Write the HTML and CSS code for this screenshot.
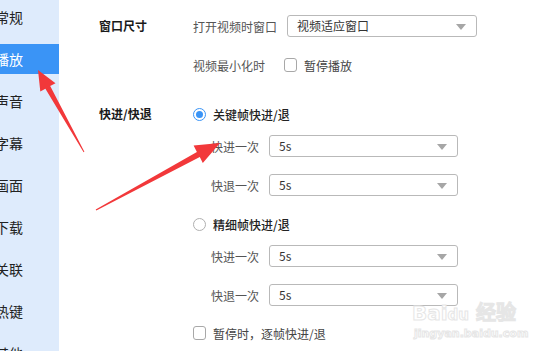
FILE: index.html
```html
<!DOCTYPE html>
<html lang="zh-CN">
<head>
<meta charset="utf-8">
<link rel="stylesheet" href="styles.css">
</head>
<body>
<div class="app">
  <nav class="sidebar">
    <div class="nav-item">常规</div>
    <div class="nav-item active">播放</div>
    <div class="nav-item">声音</div>
    <div class="nav-item">字幕</div>
    <div class="nav-item">画面</div>
    <div class="nav-item">下载</div>
    <div class="nav-item">关联</div>
    <div class="nav-item">热键</div>
    <div class="nav-item">其他</div>
  </nav>
  <main class="main">
    <section class="section sec-window">
      <div class="heading">窗口尺寸</div>
      <div class="body">
        <div class="row">
          <span class="label label-wide">打开视频时窗口</span>
          <div class="select select-wide"><span>视频适应窗口</span><i class="caret"></i></div>
        </div>
        <div class="row row-gap">
          <span class="label label-min">视频最小化时</span>
          <span class="checkbox"></span>
          <span class="opt">暂停播放</span>
        </div>
      </div>
    </section>
    <section class="section sec-seek">
      <div class="heading">快进/快退</div>
      <div class="body">
        <div class="row">
          <span class="radio on"></span><span class="radio-label">关键帧快进/退</span>
        </div>
        <div class="row sub first">
          <span class="label">快进一次</span>
          <div class="select"><span>5s</span><i class="caret"></i></div>
        </div>
        <div class="row sub">
          <span class="label">快退一次</span>
          <div class="select"><span>5s</span><i class="caret"></i></div>
        </div>
        <div class="row row-gap">
          <span class="radio"></span><span class="radio-label">精细帧快进/退</span>
        </div>
        <div class="row sub first">
          <span class="label">快进一次</span>
          <div class="select"><span>5s</span><i class="caret"></i></div>
        </div>
        <div class="row sub">
          <span class="label">快退一次</span>
          <div class="select"><span>5s</span><i class="caret"></i></div>
        </div>
        <div class="row row-last">
          <span class="checkbox"></span><span class="opt">暂停时，逐帧快进/退</span>
        </div>
      </div>
    </section>
  </main>
</div>
<div class="watermark">
  <div class="wm-top">Bai<span class="wm-du">du</span> 经验</div>
  <div class="wm-bottom">jingyan.baidu.com</div>
</div>
<svg class="arrows" width="534" height="351" viewBox="0 0 534 351">
  <polygon fill="#f2383a" points="38,70 55.5,83.2 50.2,86.1 84.4,151.8 83.6,152.2 45.4,88.7 40.3,91.6"/>
  <polygon fill="#f2383a" points="220,143 202.8,163.1 199.8,157.1 96.3,210.5 95.7,209.5 196.9,151.9 193.6,145.4"/>
</svg>
</body>
</html>
```
FILE: styles.css
```css
* { box-sizing: border-box; }
html, body {
  margin: 0;
  padding: 0;
  width: 534px;
  height: 351px;
  overflow: hidden;
  background: #fff;
  font-family: "Noto Sans CJK SC", "Noto Sans", sans-serif;
}
.app {
  display: flex;
  height: 351px;
}
.sidebar {
  width: 59px;
  flex: none;
  background: #deebfc;
  padding-top: 2px;
  display: flex;
  flex-direction: column;
  gap: 12px;
  overflow: hidden;
}
.nav-item {
  height: 30px;
  line-height: 30px;
  font-size: 14px;
  color: #222;
  text-indent: -5px;
  white-space: nowrap;
}
.nav-item.active {
  background: #3a94f6;
  color: #fff;
}
.main {
  flex: 1;
  padding-left: 40px;
  font-size: 12px;
  color: #444;
}
.section {
  display: flex;
}
.sec-window { padding-top: 15px; }
.sec-seek { padding-top: 27px; }
.heading {
  width: 94px;
  flex: none;
  height: 22px;
  line-height: 22px;
  color: #1a1a1a;
  font-weight: 600;
}
.body {
  display: flex;
  flex-direction: column;
}
.row {
  display: flex;
  align-items: center;
  height: 22px;
}
.row-gap { margin-top: 17px; }
.row.sub { margin-top: 17px; padding-left: 18px; }
.row.sub.first { margin-top: 10px; }
.row-last { margin-top: 16px; }
.label { color: #555; white-space: nowrap; }
.label-wide { width: 94px; }
.label-min { width: 91px; }
.row.sub .label { width: 58px; }
.select {
  position: relative;
  width: 189px;
  height: 22px;
  border: 1px solid #b9b9b9;
  border-radius: 3px;
  padding-left: 9px;
  line-height: 20px;
  color: #333;
}
.select-wide { width: 190px; }
.caret {
  position: absolute;
  right: 10px;
  top: 8px;
  width: 0;
  height: 0;
  border-left: 5px solid transparent;
  border-right: 5px solid transparent;
  border-top: 6px solid #a6a6a6;
}
.checkbox {
  width: 13px;
  height: 14px;
  border: 1px solid #a8a8a8;
  border-radius: 3px;
  background: #fff;
  flex: none;
}
.opt {
  margin-left: 7px;
  color: #444;
}
.radio {
  width: 13px;
  height: 13px;
  border-radius: 50%;
  border: 1px solid #b0b0b0;
  flex: none;
  display: flex;
  align-items: center;
  justify-content: center;
}
.radio.on { border-color: #3a94f6; }
.radio.on::after {
  content: "";
  width: 7px;
  height: 7px;
  border-radius: 50%;
  background: #3a94f6;
}
.radio-label {
  margin-left: 7px;
  color: #222;
  font-weight: 500;
}
.arrows {
  position: absolute;
  left: 0;
  top: 0;
  pointer-events: none;
}
.watermark {
  position: absolute;
  left: 412px;
  top: 302px;
  font-family: "DejaVu Sans", sans-serif;
  color: #fff;
  -webkit-text-stroke: 1px #e6e6e6;
  pointer-events: none;
}
.wm-top {
  font-size: 20px;
  font-weight: bold;
  line-height: 22px;
}
.wm-du {
  font-size: 15px;
}
.wm-bottom {
  font-size: 11px;
  font-weight: bold;
  line-height: 16px;
  margin-left: 2px;
}
```
